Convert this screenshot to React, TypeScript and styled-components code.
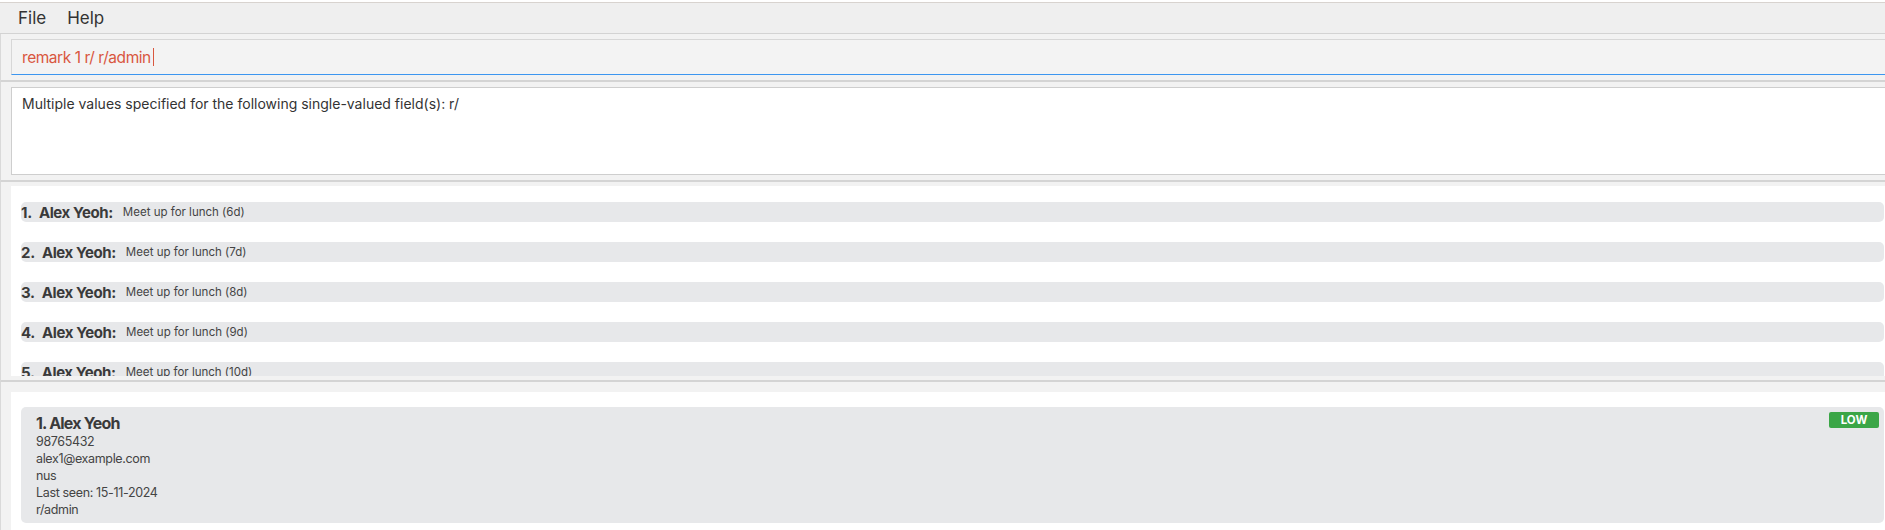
import styled, { createGlobalStyle } from 'styled-components';

const GlobalStyle = createGlobalStyle`
  html, body {
    margin: 0;
    padding: 0;
    background: #ffffff;
    overflow: hidden;
  }
  body {
    font-family: Inter, "Open Sans", "Liberation Sans", sans-serif;
  }
`;

const remarks = [6, 7, 8, 9, 10];

const Window = styled.div`
  width: 1885px;
  height: 530px;
  box-sizing: border-box;
  padding-top: 2px;
  overflow: hidden;
  display: flex;
  flex-direction: column;
  background: #ffffff;
`;

const MenuBar = styled.div`
  height: 30px;
  display: flex;
  align-items: center;
  gap: 21px;
  padding-left: 18px;
  background: #efefef;
  border-top: 1px solid #d8d3cf;
  border-bottom: 1px solid #d3d3d3;
`;

const MenuItem = styled.span`
  font-size: 17px;
  color: #333333;
`;

const Pane = styled.div<{ $top: number; $bottom: number; $grow?: boolean }>`
  background: #f2f2f2;
  border-left: 1px solid #d9d9d9;
  padding: ${(p) => p.$top}px 0 ${(p) => p.$bottom}px 10px;
  border-bottom: ${(p) => (p.$grow ? 'none' : '2px solid #d4d4d4')};
  flex: ${(p) => (p.$grow ? '1' : 'none')};
  display: flex;
  flex-direction: column;
  min-height: 0;
`;

const CommandField = styled.div`
  height: 36px;
  box-sizing: border-box;
  margin-right: -20px;
  padding-left: 10px;
  display: flex;
  align-items: center;
  background: #f3f3f3;
  border-top: 1px solid #d7d7d7;
  border-left: 1px solid #d7d7d7;
  border-bottom: 1px solid #3c96f0;
  font-size: 15.5px;
  letter-spacing: -0.45px;
  color: #d9573f;
`;

const Caret = styled.span`
  display: inline-block;
  width: 1px;
  height: 18px;
  margin-left: 2px;
  background: #d9573f;
`;

const ResultBox = styled.div`
  height: 88px;
  box-sizing: border-box;
  margin-right: -20px;
  padding: 6px 10px;
  background: #ffffff;
  border: 1px solid #cecece;
  font-size: 14px;
  line-height: 20px;
  letter-spacing: 0;
  color: #333333;
`;

const ListArea = styled.div`
  height: 190px;
  box-sizing: border-box;
  padding: 16px 1px 0 10px;
  background: #ffffff;
  overflow: hidden;
  display: flex;
  flex-direction: column;
  gap: 20px;
`;

const ListCell = styled.div`
  flex: none;
  height: 20px;
  display: flex;
  align-items: center;
  background: #e7e8ea;
  border-radius: 5px;
  color: #3a3a3a;
`;

const CellIndex = styled.span`
  font-size: 15px;
  font-weight: 700;
  letter-spacing: -0.3px;
  margin-right: 7px;
`;

const CellName = styled.span`
  font-size: 15px;
  font-weight: 700;
  letter-spacing: -0.4px;
  margin-right: 10px;
`;

const CellRemark = styled.span`
  font-size: 11.5px;
  color: #444444;
`;

const DetailArea = styled.div`
  flex: 1;
  padding: 15px 1px 0 10px;
  background: #ffffff;
`;

const Card = styled.div`
  position: relative;
  padding: 6px 15px 5px;
  background: #e7e8ea;
  border-radius: 5px;
  color: #444444;
`;

const CardName = styled.div`
  font-size: 16px;
  font-weight: 700;
  line-height: 20px;
  letter-spacing: -0.8px;
  color: #3a3a3a;
`;

const CardLine = styled.div`
  font-size: 12.5px;
  line-height: 17px;
  letter-spacing: -0.35px;
`;

const Badge = styled.span`
  position: absolute;
  top: 5px;
  right: 5px;
  width: 50px;
  height: 16px;
  display: flex;
  align-items: center;
  justify-content: center;
  border-radius: 2px;
  background: #3ba647;
  color: #ffffff;
  font-size: 11.5px;
  font-weight: 700;
`;

export default function App() {
  return (
    <>
      <GlobalStyle />
      <Window>
        <MenuBar>
          <MenuItem>File</MenuItem>
          <MenuItem>Help</MenuItem>
        </MenuBar>
        <Pane $top={5} $bottom={5}>
          <CommandField>
            remark 1 r/ r/admin
            <Caret />
          </CommandField>
        </Pane>
        <Pane $top={5} $bottom={5}>
          <ResultBox>Multiple values specified for the following single-valued field(s): r/</ResultBox>
        </Pane>
        <Pane $top={4} $bottom={4}>
          <ListArea>
            {remarks.map((d, i) => (
              <ListCell key={d}>
                <CellIndex>{i + 1}.</CellIndex>
                <CellName>Alex Yeoh:</CellName>
                <CellRemark>Meet up for lunch ({d}d)</CellRemark>
              </ListCell>
            ))}
          </ListArea>
        </Pane>
        <Pane $top={10} $bottom={0} $grow>
          <DetailArea>
            <Card>
              <CardName>1. Alex Yeoh</CardName>
              <CardLine>98765432</CardLine>
              <CardLine>alex1@example.com</CardLine>
              <CardLine>nus</CardLine>
              <CardLine>Last seen: 15-11-2024</CardLine>
              <CardLine>r/admin</CardLine>
              <Badge>LOW</Badge>
            </Card>
          </DetailArea>
        </Pane>
      </Window>
    </>
  );
}
